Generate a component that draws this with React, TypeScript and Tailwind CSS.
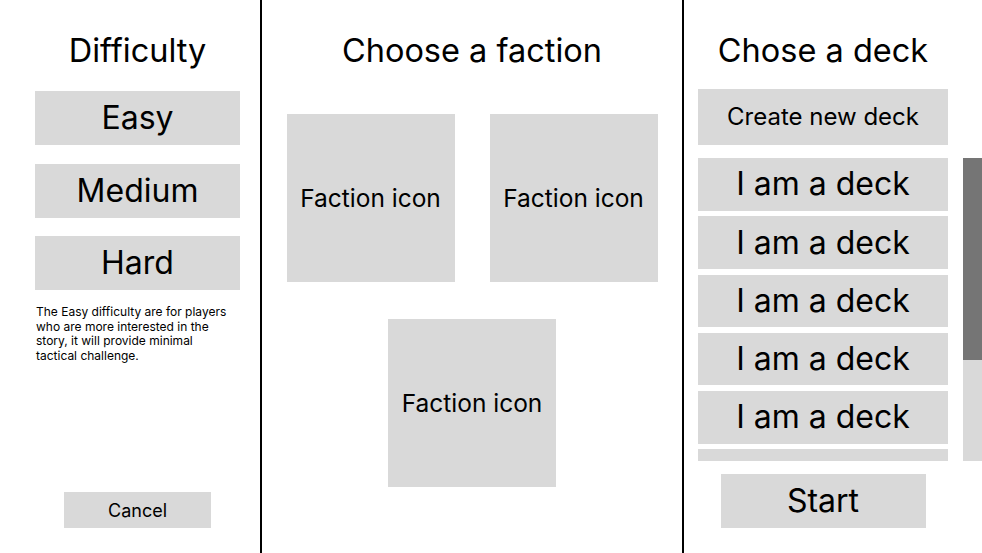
const difficulties = ["Easy", "Medium", "Hard"]
const decks = ["I am a deck", "I am a deck", "I am a deck", "I am a deck", "I am a deck", "I am a deck"]

function Title({ children }: { children: React.ReactNode }) {
  return <h1 className="mt-[31px] text-[32.5px] leading-[39px] text-black whitespace-nowrap">{children}</h1>
}

function FactionTile() {
  return (
    <div className="flex h-[168px] w-[168px] items-center justify-center bg-[#d9d9d9] text-[24.5px]">
      Faction icon
    </div>
  )
}

export default function App() {
  return (
    <div
      className="flex h-[553px] w-[982px] overflow-hidden bg-white text-black"
      style={{ fontFamily: "Inter, 'Liberation Sans', sans-serif" }}
    >
      {/* Difficulty */}
      <div className="flex w-[262px] shrink-0 flex-col border-r-2 border-black pl-[35px] pb-[25px]">
        <div className="flex w-[205px] flex-1 flex-col items-center">
          <Title>Difficulty</Title>
          <div className="mt-[21px] flex w-full flex-col gap-[18.5px]">
            {difficulties.map((d) => (
              <button key={d} className="flex h-[54px] w-full items-center justify-center bg-[#d9d9d9] text-[32px]">
                {d}
              </button>
            ))}
          </div>
          <p className="mt-[15px] w-full pl-px pr-[7px] text-[12px] leading-[14.7px]">
            The Easy difficulty are for players who are more interested in the story, it will provide minimal
            tactical challenge.
          </p>
          <button className="mt-auto flex h-[36px] w-[147px] items-center justify-center bg-[#d9d9d9] text-[18px]">
            Cancel
          </button>
        </div>
      </div>

      {/* Faction */}
      <div className="flex w-[422px] shrink-0 flex-col items-center border-r-2 border-black">
        <Title>Choose a faction</Title>
        <div className="mt-[44px] flex flex-col items-center gap-[37px]">
          <div className="flex gap-[35px]">
            <FactionTile />
            <FactionTile />
          </div>
          <FactionTile />
        </div>
      </div>

      {/* Deck */}
      <div className="flex flex-1 flex-col pl-[14px] pb-[25px]">
        <div className="flex w-[250px] flex-col items-center">
          <Title>Chose a deck</Title>
          <button className="mt-[19px] flex h-[56px] w-full items-center justify-center bg-[#d9d9d9] text-[24px]">
            Create new deck
          </button>
        </div>
        <div className="mt-[13px] flex h-[303px]">
          <div className="flex w-[250px] flex-col gap-[5.75px] overflow-hidden">
            {decks.map((d, i) => (
              <button
                key={i}
                className="flex h-[52.5px] w-full shrink-0 items-center justify-center bg-[#d9d9d9] text-[32px]"
              >
                {d}
              </button>
            ))}
          </div>
          <div className="ml-[15px] flex w-[19px] flex-col bg-[#d9d9d9]">
            <div className="h-[202px] bg-[#757575]" />
          </div>
        </div>
        <div className="mt-[13px] flex w-[250px] justify-center">
          <button className="flex h-[54px] w-[205px] items-center justify-center bg-[#d9d9d9] text-[32px]">
            Start
          </button>
        </div>
      </div>
    </div>
  )
}
